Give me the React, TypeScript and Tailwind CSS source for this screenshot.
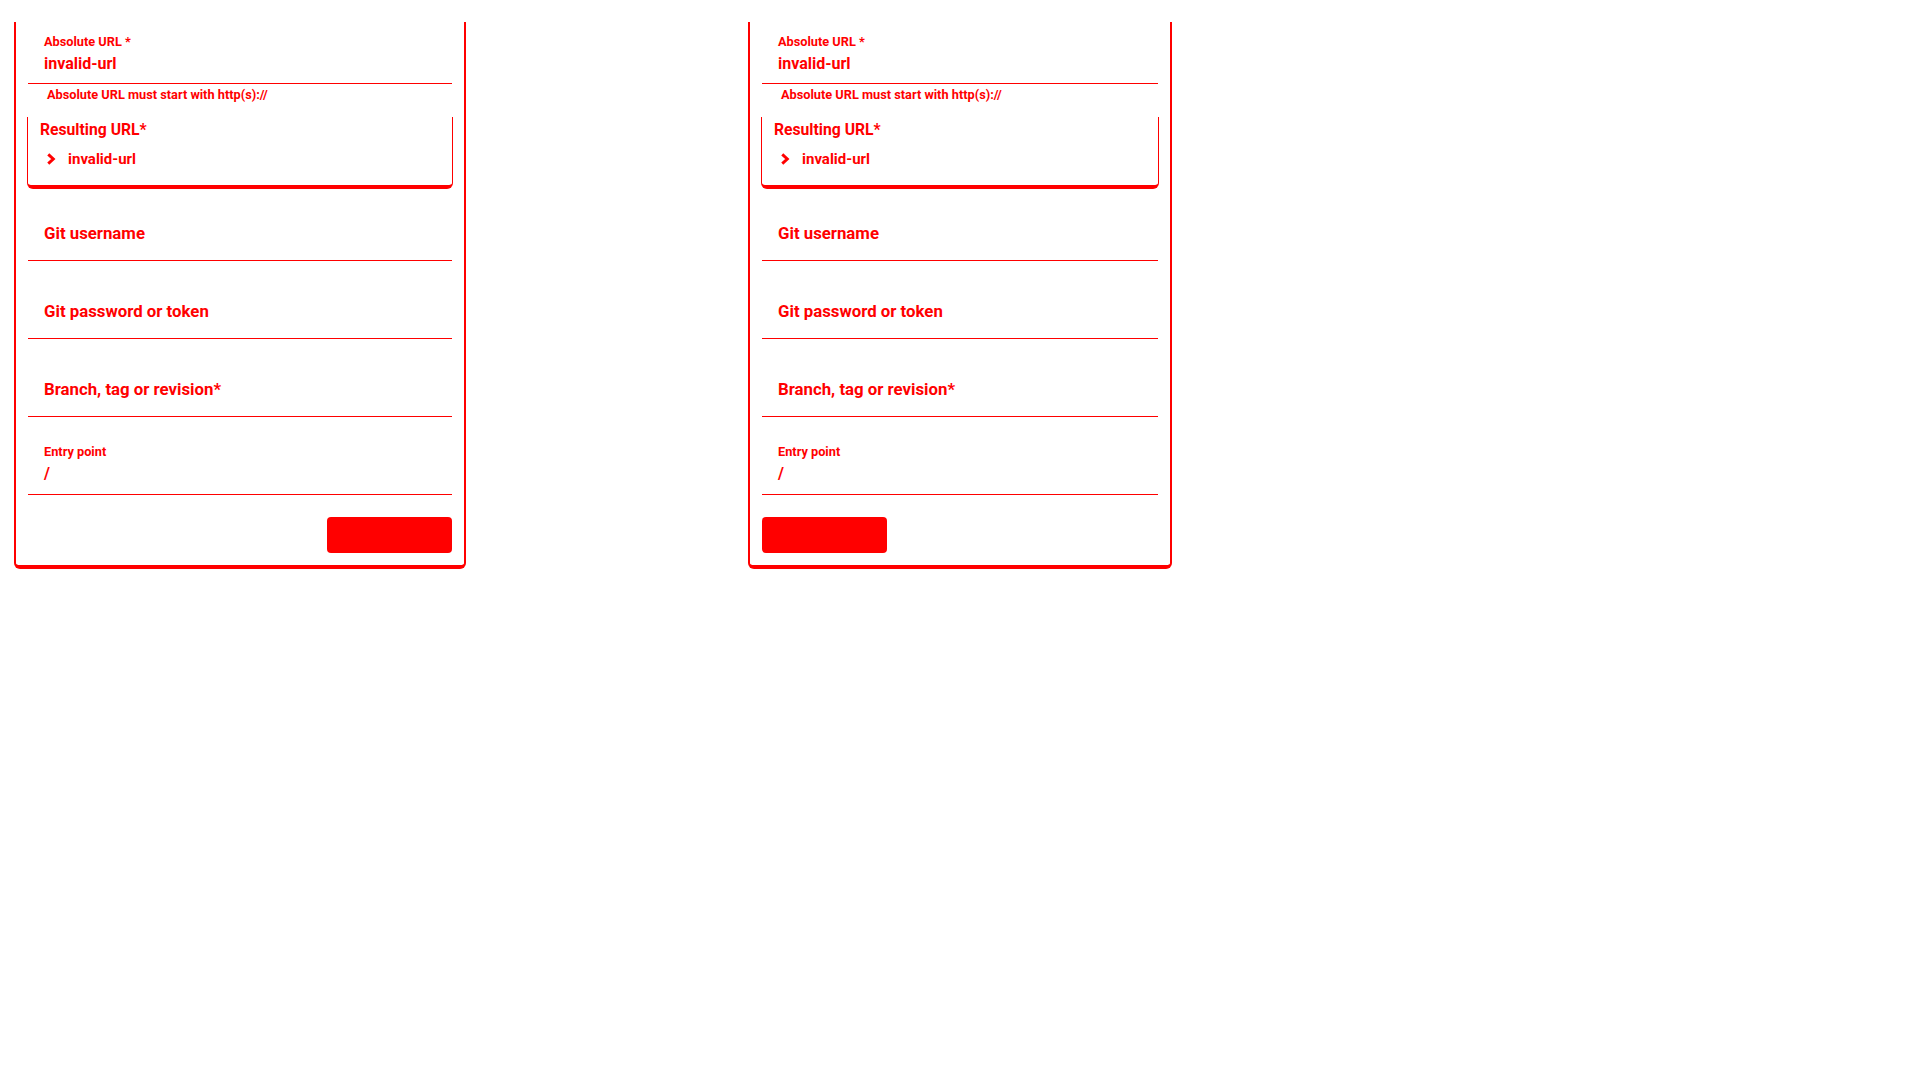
import React from "react";

const RED = "text-[#ff0000]";

function Chevron() {
  return (
    <svg viewBox="0 0 24 24" className="h-[22px] w-[22px] shrink-0" fill="none">
      <polyline points="9,7 14.5,12 9,17" stroke="#ff0000" strokeWidth="3.2" />
    </svg>
  );
}

function EmptyField({ label, first }: { label: string; first?: boolean }) {
  return (
    <div
      className={`h-[56px] border-b border-[#ff0000] pl-4 pt-[20px] ${first ? "mt-4" : "mt-[22px]"}`}
    >
      <p className="text-[16.8px] leading-[16px] font-bold">{label}</p>
    </div>
  );
}

function RepoCard({ width, buttonRight }: { width: string; buttonRight: boolean }) {
  return (
    <div
      className={`${width} mt-[22px] border-x-2 border-b-4 border-[#ff0000] rounded-b-[6px] px-3 pt-[6px] pb-[12px] bg-white`}
    >
      {/* Absolute URL */}
      <div className="h-[56px] border-b border-[#ff0000] pl-4 pt-[8px]">
        <p className="text-[12.75px] leading-[12px] font-bold">Absolute URL *</p>
        <p className="mt-2 text-[16px] leading-[16px] font-bold">invalid-url</p>
      </div>
      <p className="pl-[19px] pt-[5px] text-[12.75px] leading-[12px] font-bold">
        Absolute URL must start with http(s)://
      </p>

      {/* Resulting URL */}
      <div className="mt-4 -mx-px border-x border-b-4 border-[#ff0000] rounded-b-[6px] px-3 pt-[5px] pb-[15px]">
        <p className="text-[15.7px] leading-[16px] font-bold">Resulting URL*</p>
        <div className="mt-[10px] flex items-center gap-[6px]">
          <Chevron />
          <span className="text-[15px] leading-[22px] font-bold">invalid-url</span>
        </div>
      </div>

      <EmptyField label="Git username" first />
      <EmptyField label="Git password or token" />
      <EmptyField label="Branch, tag or revision*" />

      {/* Entry point */}
      <div className="mt-[22px] h-[56px] border-b border-[#ff0000] pl-4 pt-[7px]">
        <p className="text-[12.75px] leading-[12px] font-bold">Entry point</p>
        <p className="mt-2 text-[16px] leading-[16px] font-bold">/</p>
      </div>

      <div className={`mt-[22px] flex ${buttonRight ? "justify-end" : "justify-start"}`}>
        <button className="h-9 w-[125px] rounded-[4px] bg-[#ff0000]" />
      </div>
    </div>
  );
}

export default function App() {
  return (
    <div
      className={`min-h-screen w-full bg-white ${RED}`}
      style={{ fontFamily: "Roboto, 'Liberation Sans', sans-serif" }}
    >
      <div className="flex items-start pl-[14px]">
        <RepoCard width="w-[452px]" buttonRight />
        <div className="ml-[282px]">
          <RepoCard width="w-[424px]" buttonRight={false} />
        </div>
      </div>
    </div>
  );
}
